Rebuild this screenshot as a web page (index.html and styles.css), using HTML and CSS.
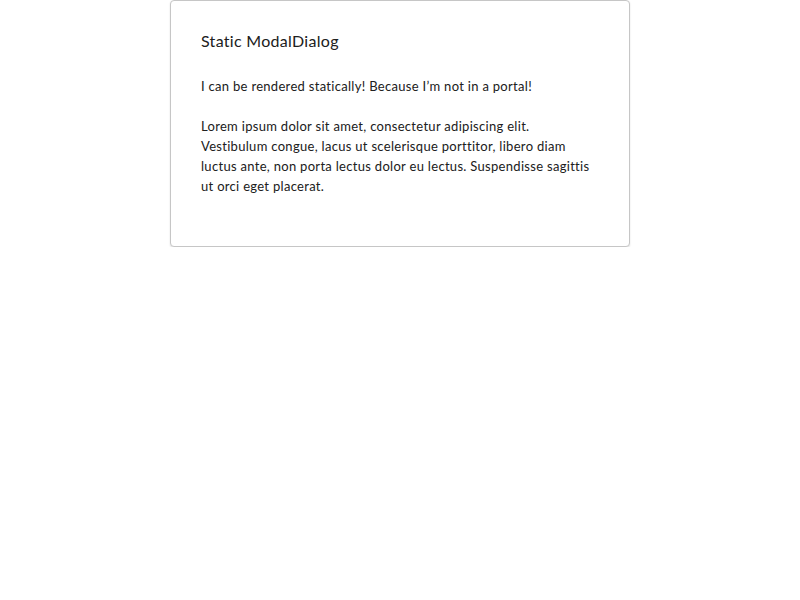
FILE: index.html
```html
<!DOCTYPE html>
<html lang="en">
<head>
<meta charset="utf-8">
<title>Static ModalDialog</title>
<link rel="stylesheet" href="styles.css">
</head>
<body>
<div class="page">
  <div class="dialog" role="dialog">
    <h2 class="dialog-title">Static ModalDialog</h2>
    <div class="dialog-body">
      <p>I can be rendered statically! Because I’m not in a portal!</p>
      <p>Lorem ipsum dolor sit amet, consectetur adipiscing elit. Vestibulum congue, lacus ut scelerisque porttitor, libero diam luctus ante, non porta lectus dolor eu lectus. Suspendisse sagittis ut orci eget placerat.</p>
    </div>
  </div>
</div>
</body>
</html>
```
FILE: styles.css
```css
html, body {
  margin: 0;
  padding: 0;
  background: #fff;
}
body {
  font-family: Lato, "Open Sans", sans-serif;
  color: #202020;
  letter-spacing: 0.3px;
}
.page {
  display: flex;
  justify-content: center;
}
.dialog {
  box-sizing: border-box;
  width: 460px;
  border: 1px solid #c6c6c6;
  border-radius: 4px;
  box-shadow: 0 1px 2px rgba(0, 0, 0, 0.12);
  padding: 30px 30px 30px;
  background: #fff;
}
.dialog-title {
  margin: 0 0 25px;
  font-size: 16px;
  font-weight: 400;
  line-height: 20px;
}
.dialog-body p {
  margin: 0 0 20px;
  font-size: 13px;
  line-height: 20px;
}
```
